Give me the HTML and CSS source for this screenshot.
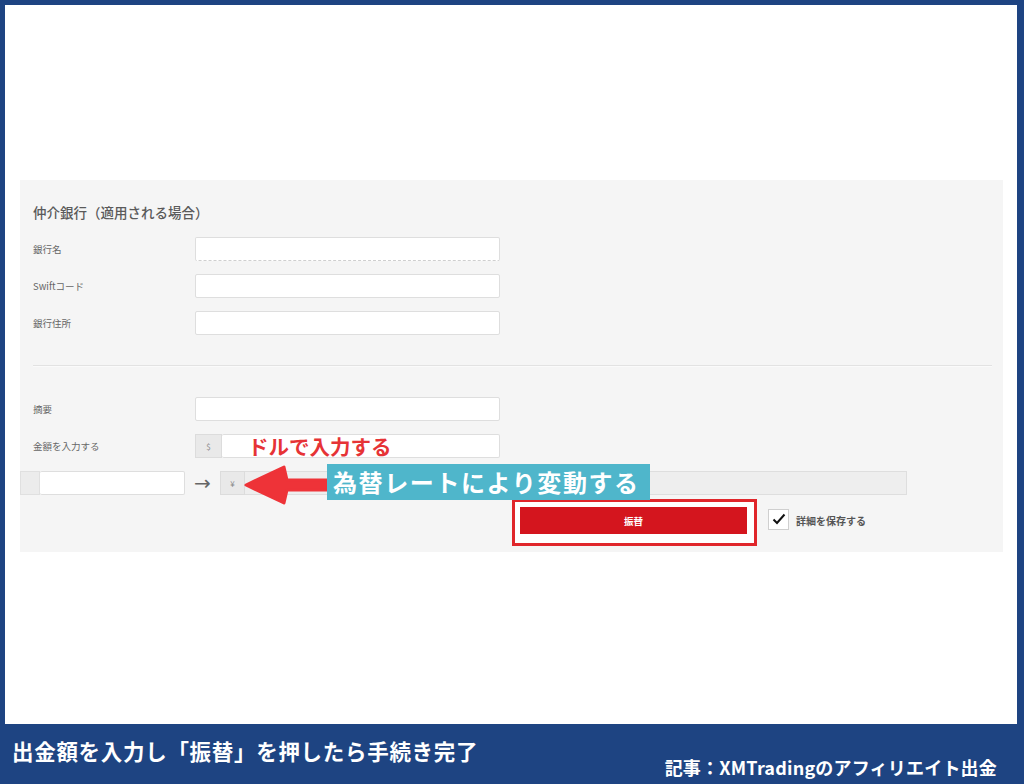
FILE: index.html
```html
<!DOCTYPE html>
<html lang="ja">
<head>
<meta charset="utf-8">
<link rel="stylesheet" href="styles.css">
</head>
<body>
<div class="page">
  <div class="stage">
    <div class="panel">
      <div class="section">
        <h3 class="heading">仲介銀行（適用される場合）</h3>
        <div class="row"><span class="label">銀行名</span><span class="input dashed"></span></div>
        <div class="row"><span class="label">Swiftコード</span><span class="input"></span></div>
        <div class="row"><span class="label">銀行住所</span><span class="input"></span></div>
      </div>
      <div class="divider"></div>
      <div class="section section-second">
        <div class="row"><span class="label">摘要</span><span class="input"></span></div>
        <div class="row"><span class="label">金額を入力する</span><span class="group"><span class="addon">$</span><span class="input grow"></span></span></div>
      </div>
      <div class="convert">
        <span class="addon-left"></span>
        <span class="input small"></span>
        <span class="arrow">→</span>
        <span class="addon yen">¥</span>
        <span class="readonly"></span>
      </div>
      <div class="actions">
        <div class="highlight"><span class="button">振替</span></div>
        <span class="check"><svg width="14" height="12" viewBox="0 0 14 12"><path d="M1.5 6.5 L5 10 L12.5 1.5" fill="none" stroke="#111" stroke-width="2"/></svg></span>
        <span class="check-label">詳細を保存する</span>
      </div>

      <div class="note-red">ドルで入力する</div>
      <svg class="red-arrow" width="86" height="42" viewBox="0 0 86 42"><path d="M2 21 L40 3 L43 16 L84 16 L84 26 L43 26 L40 39 Z" fill="#ee3338" stroke="#ee3338" stroke-width="3" stroke-linejoin="round"/></svg>
      <div class="note-teal">為替レートにより変動する</div>
    </div>
  </div>
  <div class="footer">
    <span class="footer-title">出金額を入力し「振替」を押したら手続き完了</span>
    <span class="footer-credit">記事：XMTradingのアフィリエイト出金</span>
  </div>
</div>
</body>
</html>
```
FILE: styles.css
```css
* { box-sizing: border-box; }
html, body { margin: 0; padding: 0; }
body {
  font-family: "Noto Sans CJK JP", "Noto Sans", sans-serif;
  background: #1e4482;
}
.page {
  width: 1024px;
  height: 784px;
  display: flex;
  flex-direction: column;
}
.stage {
  height: 724px;
  background: #fff;
  border-top: 5px solid #1e4482;
  border-left: 5px solid #1e4482;
  border-right: 7px solid #1e4482;
  padding: 175px 14px 0 15px;
}
.panel {
  position: relative;
  background: #f5f5f5;
  height: 372px;
  padding-top: 23px;
}
.section { padding: 0 11px 0 13px; }
.heading {
  margin: 0 0 16px;
  font-size: 13.5px;
  line-height: 18px;
  font-weight: 500;
  color: #5a5a5a;
}
.row {
  display: flex;
  align-items: center;
  height: 24px;
  margin-bottom: 13px;
}
.label {
  width: 162px;
  font-size: 9.5px;
  color: #666;
}
.input {
  display: block;
  width: 305px;
  height: 24px;
  background: #fff;
  border: 1px solid #dedede;
  border-radius: 2px;
}
.input.dashed { border-bottom: 1px dashed #cfcfcf; }
.divider {
  margin: 30px 11px 0 13px;
  height: 2px;
  background: #e2e2e2;
  border-bottom: 1px solid #fafafa;
}
.section-second { padding-top: 30px; }
.group { display: flex; width: 305px; }
.addon {
  display: flex;
  align-items: center;
  justify-content: center;
  width: 27px;
  height: 24px;
  background: #e9e9e9;
  border: 1px solid #dcdcdc;
  font-size: 8px;
  color: #888;
}
.input.grow { width: 278px; border-left: none; }
.convert {
  display: flex;
  align-items: center;
  height: 24px;
}
.addon-left {
  width: 20px;
  height: 24px;
  background: #ececec;
  border: 1px solid #e0e0e0;
}
.input.small { width: 145px; border-left: none; }
.arrow {
  width: 35px;
  text-align: center;
  font-size: 20px;
  line-height: 24px;
  color: #666;
  font-family: "DejaVu Sans", sans-serif;
}
.yen { width: 25px; }
.readonly {
  width: 662px;
  height: 24px;
  background: #eeeeee;
  border: 1px solid #dedede;
  border-left: none;
}
.actions {
  display: flex;
  align-items: center;
  margin-top: 4px;
  padding-left: 492px;
}
.highlight {
  width: 245px;
  height: 47px;
  border: 3px solid #e0262b;
  background: #fff;
  padding: 5px 7px 9px 5px;
}
.button {
  display: flex;
  align-items: center;
  justify-content: center;
  height: 27px;
  background: #d4151e;
  color: #fff;
  font-size: 9.5px;
  font-weight: 700;
}
.check {
  display: flex;
  align-items: center;
  justify-content: center;
  width: 21px;
  height: 21px;
  margin-left: 11px;
  margin-top: -7px;
  background: #fff;
  border: 1px solid #cfcfcf;
}
.check-label {
  margin-left: 7px;
  margin-top: -4px;
  font-size: 10px;
  font-weight: 700;
  color: #555;
}
.note-red {
  position: absolute;
  left: 228px;
  top: 254px;
  font-size: 20.5px;
  line-height: 24px;
  font-weight: 700;
  color: #e63336;
}
.red-arrow {
  position: absolute;
  left: 224px;
  top: 284px;
}
.note-teal {
  position: absolute;
  left: 307px;
  top: 284px;
  width: 323px;
  height: 36px;
  background: #4fb6cb;
  color: #fff;
  font-size: 24px;
  line-height: 36px;
  font-weight: 700;
  padding-left: 6px;
  letter-spacing: 1.6px;
  white-space: nowrap;
}
.footer {
  height: 60px;
  position: relative;
  color: #fff;
  font-weight: 700;
}
.footer-title {
  position: absolute;
  left: 12px;
  top: 12px;
  font-size: 21.5px;
  line-height: 30px;
  letter-spacing: 0.7px;
}
.footer-credit {
  position: absolute;
  right: 27px;
  top: 31px;
  font-size: 18px;
  line-height: 24px;
  letter-spacing: 0.2px;
}
```
